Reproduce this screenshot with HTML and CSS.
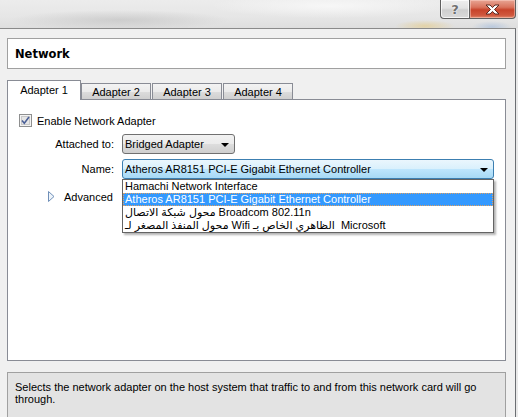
FILE: index.html
```html
<!DOCTYPE html>
<html>
<head>
<meta charset="utf-8">
<link rel="stylesheet" href="styles.css">
</head>
<body>
<div class="window">
  <div class="titlebar">
    <div class="caption-btn help">?</div>
    <div class="caption-btn close">
      <svg width="17" height="11" viewBox="0 0 17 11">
        <path d="M2 1 H6 L8.5 3.6 L11 1 H15 L10.5 5.5 L15 10 H11 L8.5 7.4 L6 10 H2 L6.5 5.5 Z" fill="#fff" stroke="#5a2a22" stroke-width="1" stroke-linejoin="round"/>
      </svg>
    </div>
  </div>
  <div class="frame">
    <div class="header">Network</div>
    <div class="tabs">
      <div class="tab active">Adapter 1</div>
      <div class="tab">Adapter 2</div>
      <div class="tab">Adapter 3</div>
      <div class="tab">Adapter 4</div>
    </div>
    <div class="panel">
      <div class="check-row">
        <span class="checkbox">
          <svg width="13" height="13" viewBox="0 0 13 13">
            <rect x="0.5" y="0.5" width="12" height="12" fill="#f4f4f4" stroke="#8e8f8f"/>
            <rect x="2.5" y="2.5" width="8" height="8" fill="#e6e6e6" stroke="#c8c8c8"/>
            <path d="M3 6.5 L5.3 9.2 L10 3" fill="none" stroke="#4a5f97" stroke-width="1.6"/>
          </svg>
        </span>
        <span>Enable Network Adapter</span>
      </div>
      <div class="form">
        <span class="label">Attached to:</span>
        <div class="combo combo-small">
          <span>Bridged Adapter</span>
          <span class="arrow"></span>
        </div>
        <span class="label">Name:</span>
        <div class="combo-wrap">
          <div class="combo combo-open">
            <span>Atheros AR8151 PCI-E Gigabit Ethernet Controller</span>
            <span class="arrow"></span>
          </div>
          <div class="list">
            <div class="item">Hamachi Network Interface</div>
            <div class="item selected">Atheros AR8151 PCI-E Gigabit Ethernet Controller</div>
            <div class="item">محول شبكة الاتصال Broadcom 802.11n</div>
            <div class="item">محول المنفذ المصغر لـ Wifi الظاهري الخاص بـ&nbsp; Microsoft</div>
          </div>
        </div>
      </div>
      <div class="advanced">
        <svg class="expander" width="7" height="11" viewBox="0 0 7 11">
          <path d="M0.5 0.5 L6 5.5 L0.5 10.5 Z" fill="#eef4fa" stroke="#6f8fb8" stroke-width="1"/>
        </svg>
        <span>Advanced</span>
      </div>
    </div>
    <div class="desc">Selects the network adapter on the host system that traffic to and from this network card will go through.</div>
  </div>
</div>
</body>
</html>
```
FILE: styles.css
```css
* { box-sizing: border-box; }

body {
  margin: 0;
  width: 518px;
  height: 417px;
  overflow: hidden;
  background: #e9e9e9;
  font-family: "Liberation Sans", "DejaVu Sans", sans-serif;
  font-size: 11px;
  color: #000;
}

.window {
  display: flex;
  flex-direction: column;
  height: 417px;
}

.titlebar {
  height: 28px;
  flex: none;
  display: flex;
  justify-content: flex-end;
  align-items: flex-start;
  padding-right: 2px;
  background:
    radial-gradient(ellipse 30px 6px at 425px 26px, rgba(230, 200, 120, 0.55), rgba(230, 200, 120, 0)),
    radial-gradient(ellipse 20px 6px at 492px 27px, rgba(150, 180, 220, 0.5), rgba(150, 180, 220, 0)),
    radial-gradient(ellipse 110px 10px at 120px 20px, rgba(190, 190, 190, 0.6), rgba(190, 190, 190, 0)),
    radial-gradient(ellipse 120px 12px at 330px 6px, rgba(250, 250, 250, 0.8), rgba(250, 250, 250, 0)),
    linear-gradient(#ececec, #e6e6e6 60%, #dedede);
}

.caption-btn {
  height: 19px;
  border: 1px solid #5f5f5f;
  border-top: none;
  display: flex;
  align-items: center;
  justify-content: center;
}

.help {
  width: 29px;
  border-right: none;
  border-bottom-left-radius: 4px;
  background: linear-gradient(#eeeeee, #e2e2e2 45%, #cfcfcf 55%, #dadada);
  color: #707070;
  font-family: "DejaVu Sans", sans-serif;
  font-weight: bold;
  font-size: 13px;
  text-shadow: 0 0 2px #fff, 0 0 1px #fff;
  box-shadow: inset 0 0 0 1px rgba(255, 255, 255, 0.7);
}

.close {
  width: 47px;
  border-bottom-right-radius: 4px;
  background: linear-gradient(#e8a594, #d9735d 40%, #c7432a 55%, #d0583e 85%, #e08a6e);
  box-shadow: inset 0 0 0 1px rgba(255, 220, 210, 0.45);
}

.frame {
  flex: 1;
  width: 516px;
  border-top: 1px solid #8a8a8a;
  border-right: 1px solid #6b6e72;
  background: #f0f0f0;
  padding: 9px 0 0 7px;
  display: flex;
  flex-direction: column;
}

.header {
  width: 499px;
  height: 31px;
  flex: none;
  border: 1px solid #a0a0a0;
  background: #fff;
  display: flex;
  align-items: center;
  padding-left: 7px;
  font-family: "DejaVu Sans", sans-serif;
  font-weight: bold;
  font-size: 11.5px;
}

.tabs {
  margin-top: 11px;
  height: 19px;
  flex: none;
  display: flex;
  align-items: flex-end;
}

.tab {
  width: 70px;
  height: 16px;
  margin-right: 1px;
  border: 1px solid #898c95;
  border-bottom: none;
  background: linear-gradient(#f3f3f3, #ebebeb 50%, #dddddd 50%, #cfcfcf);
  display: flex;
  align-items: center;
  justify-content: center;
  padding-top: 1px;
}

.tab.active {
  width: 74px;
  height: 20px;
  margin-right: 0;
  margin-bottom: -1px;
  background: #fff;
  position: relative;
  z-index: 1;
  padding-top: 0;
  padding-bottom: 2px;
}

.panel {
  width: 499px;
  height: 262px;
  flex: none;
  border: 1px solid #898c95;
  background: #fff;
  padding: 14px 0 0 11px;
}

.check-row {
  display: flex;
  align-items: center;
  height: 13px;
}

.checkbox {
  width: 13px;
  height: 13px;
  margin-right: 5px;
  display: flex;
}

.form {
  margin-top: 7px;
  display: grid;
  grid-template-columns: 95px auto;
  column-gap: 8px;
  row-gap: 5px;
  align-items: center;
  justify-items: start;
}

.label {
  justify-self: end;
}

.combo {
  height: 20px;
  border-radius: 3px;
  display: flex;
  align-items: center;
  justify-content: space-between;
  padding: 0 5px 0 2px;
}

.combo-small {
  width: 113px;
  border: 1px solid #707070;
  background: linear-gradient(#f2f2f2, #ebebeb 50%, #dddddd 50%, #cfcfcf);
}

.combo-wrap {
  position: relative;
  width: 372px;
}

.combo-open {
  width: 372px;
  border: 1px solid #3c7fb1;
  background: linear-gradient(#eaf6fd, #d9f0fc 50%, #bee6fd 50%, #a7d9f5);
}

.arrow {
  width: 0;
  height: 0;
  border-left: 4px solid transparent;
  border-right: 4px solid transparent;
  border-top: 4px solid #000;
  margin-top: 1px;
}

.list {
  position: absolute;
  top: 100%;
  left: 0;
  width: 372px;
  border: 1px solid #646464;
  background: #fff;
  box-shadow: 2px 2px 2px rgba(0, 0, 0, 0.3);
  z-index: 2;
}

.item {
  height: 13px;
  line-height: 13px;
  padding-left: 2px;
  white-space: nowrap;
  overflow: hidden;
}

.item.selected {
  background: #3399ff;
  color: #fff;
  outline: 1px dotted #e0a060;
  outline-offset: -1px;
}

.advanced {
  margin-top: 11px;
  padding-left: 29px;
  height: 13px;
  display: flex;
  align-items: center;
}

.expander {
  margin-right: 9px;
}

.desc {
  flex: 1;
  width: 499px;
  margin-top: 11px;
  border: 1px solid #a0a0a0;
  border-bottom: none;
  background: #e3e3e3;
  padding: 8px 7px 0 7px;
  line-height: 12px;
}
```
